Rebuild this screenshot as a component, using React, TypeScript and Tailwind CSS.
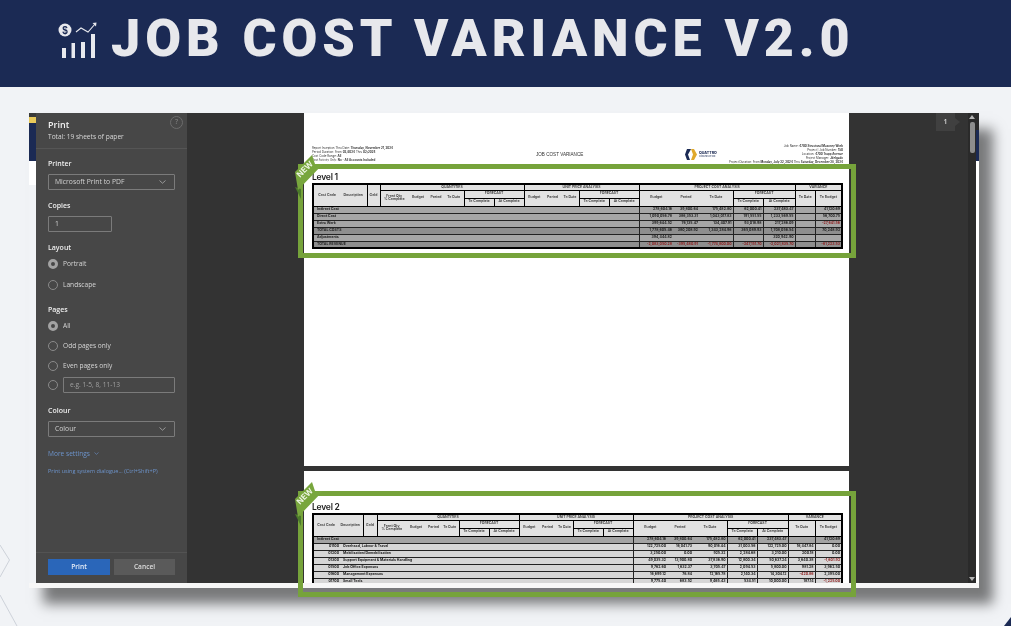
const levelOneCols = ["w-[27px]", "w-[27px]", "w-[13px]", "w-[28px]", "w-[20px]", "w-[16px]", "w-[20px]", "w-[30px]", "w-[30px]", "w-[20px]", "w-[17px]", "w-[18px]", "w-[30px]", "w-[30px]", "w-[34px]", "w-[26px]", "w-[34px]", "w-[30px]", "w-[32px]", "w-[20px]", "w-[27px]"];
const levelTwoCols = ["w-[25px]", "w-[25px]", "w-[14px]", "w-[29px]", "w-[20px]", "w-[15px]", "w-[18px]", "w-[30px]", "w-[30px]", "w-[20px]", "w-[17px]", "w-[17px]", "w-[30px]", "w-[30px]", "w-[34px]", "w-[26px]", "w-[34px]", "w-[30px]", "w-[31px]", "w-[27px]", "w-[27px]"];

type Row = { code?: string; label: string; values: string[]; tone: string };

const levelOneRows: Row[] = [
  { label: "Indirect Cost", tone: "bg-[#a6a6a6]", values: ["278,604.16", "39,800.64", "175,482.80", "62,000.41", "237,483.47", "", "41,120.69"] },
  { label: "Direct Cost", tone: "bg-[#a6a6a6]", values: ["1,090,056.78", "386,353.31", "1,043,017.83", "191,551.55", "1,233,569.55", "", "56,700.75"] },
  { label: "Extra Work", tone: "bg-[#a6a6a6]", values: ["399,644.52", "76,135.47", "134,407.91", "93,018.98", "217,286.09", "", "-27,641.56"] },
  { label: "TOTAL COSTS", tone: "bg-[#8e8e8e]", values: ["1,778,605.46", "380,208.92", "1,343,284.96", "365,089.93", "1,708,056.54", "", "70,248.92"] },
  { label: "Adjustments", tone: "bg-[#a6a6a6]", values: ["394,444.82", "", "", "", "320,942.90", "", ""] },
  { label: "TOTAL REVENUE", tone: "bg-[#8e8e8e]", values: ["-2,083,050.28", "-395,480.91", "-1,774,800.00", "-247,151.70", "-2,021,835.70", "", "-61,223.53"] },
];

const levelTwoRows: Row[] = [
  { label: "Indirect Cost", tone: "bg-[#a3a3a3]", values: ["278,604.16", "39,800.64", "175,482.80", "62,000.41", "237,483.47", "", "41,120.69"] },
  { code: "01100", label: "Overhead, Labour & Travel", tone: "bg-[#d6d6d6]", values: ["122,725.00", "16,041.73", "90,016.44", "31,003.56", "122,725.00", "16,447.84", "0.00"] },
  { code: "01200", label: "Mobilization/Demobilization", tone: "bg-[#d6d6d6]", values: ["3,250.00", "0.00", "925.32", "2,284.68", "3,210.00", "200.18", "0.00"] },
  { code: "01300", label: "Support Equipment & Materials Handling", tone: "bg-[#d6d6d6]", values: ["49,035.32", "13,900.80", "37,836.90", "12,800.34", "50,637.24", "3,640.38", "-1,601.92"] },
  { code: "01500", label: "Job Office Expenses", tone: "bg-[#d6d6d6]", values: ["9,762.60", "1,632.37", "3,705.47", "2,094.53", "5,800.00", "981.28", "3,962.50"] },
  { code: "01600", label: "Management Expenses", tone: "bg-[#d6d6d6]", values: ["16,699.12", "76.84", "12,165.78", "2,140.34", "14,304.12", "-420.86", "2,395.00"] },
  { code: "01700", label: "Small Tools", tone: "bg-[#d6d6d6]", values: ["9,775.40", "683.52", "9,465.43", "534.51", "10,000.00", "187.14", "-1,225.00"] },
];

const th = "border border-black bg-[#e2e2e2] p-0 text-center align-middle font-semibold leading-none text-[#333]";

// budget / period / to date run together without a rule in the body rows
const valueEdges = ["border-r-0", "border-x-0", "border-l-0", "", "", "", ""];

function ForecastCells() {
  return (
    <>
      <th className={th}>To Complete</th>
      <th className={th}>At Complete</th>
    </>
  );
}

function CostTable({ cols, rows }: { cols: string[]; rows: Row[] }) {
  return (
    <table className="w-[531px] table-fixed border-collapse border-2 border-black text-[3.5px] font-['Inter',sans-serif]">
      <colgroup>
        {cols.map((c, i) => (
          <col key={i} className={c} />
        ))}
      </colgroup>
      <thead>
        <tr className="h-[6px]">
          <th rowSpan={3} className={`${th} border-r-0`}>Cost Code</th>
          <th rowSpan={3} className={`${th} border-l-0`}>Description</th>
          <th rowSpan={3} className={th}>Gold</th>
          <th colSpan={6} className={th}>QUANTITIES</th>
          <th colSpan={5} className={th}>UNIT PRICE ANALYSIS</th>
          <th colSpan={5} className={th}>PROJECT COST ANALYSIS</th>
          <th colSpan={2} className={th}>VARIANCE</th>
        </tr>
        <tr className="h-[8px]">
          <th rowSpan={2} className={`${th} border-r-0`}>Front Qty<br />% Complete</th>
          <th rowSpan={2} className={`${th} border-x-0`}>Budget</th>
          <th rowSpan={2} className={`${th} border-x-0`}>Period</th>
          <th rowSpan={2} className={`${th} border-l-0`}>To Date</th>
          <th colSpan={2} className={th}>FORECAST</th>
          <th rowSpan={2} className={`${th} border-r-0`}>Budget</th>
          <th rowSpan={2} className={`${th} border-x-0`}>Period</th>
          <th rowSpan={2} className={`${th} border-l-0`}>To Date</th>
          <th colSpan={2} className={th}>FORECAST</th>
          <th rowSpan={2} className={`${th} border-r-0`}>Budget</th>
          <th rowSpan={2} className={`${th} border-x-0`}>Period</th>
          <th rowSpan={2} className={`${th} border-l-0`}>To Date</th>
          <th colSpan={2} className={th}>FORECAST</th>
          <th rowSpan={2} className={th}>To Date</th>
          <th rowSpan={2} className={th}>To Budget</th>
        </tr>
        <tr className="h-[8px]">
          <ForecastCells />
          <ForecastCells />
          <ForecastCells />
        </tr>
      </thead>
      <tbody>
        {rows.map((row) => (
          <tr key={row.label} className={`h-[7px] ${row.tone}`}>
            <td colSpan={14} className="overflow-hidden whitespace-nowrap border border-[#222] p-0 font-bold leading-none text-[#222]">
              {row.code ? (
                <span className="flex">
                  <span className="w-[25px] text-right">{row.code}</span>
                  <span className="ml-[4px]">{row.label}</span>
                </span>
              ) : (
                <span className="pl-[3px]">{row.label}</span>
              )}
            </td>
            {row.values.map((v, i) => (
              <td
                key={i}
                className={`overflow-hidden whitespace-nowrap border border-[#222] p-0 pr-[1px] text-right font-bold leading-none ${valueEdges[i]} ${v.startsWith("-") ? "text-[#8f1d1d]" : "text-[#222]"}`}
              >
                {v}
              </td>
            ))}
          </tr>
        ))}
      </tbody>
    </table>
  );
}

function SectionLabel({ children, className }: { children: string; className: string }) {
  return <div className={`h-[11px] text-[7px] font-semibold leading-[11px] text-[#eeeeee] ${className}`}>{children}</div>;
}

function Chevron() {
  return (
    <svg width="7" height="4" viewBox="0 0 7 4" fill="none" stroke="#bdbdbd" strokeWidth="0.7">
      <path d="M0.5 0.5 L3.5 3.2 L6.5 0.5" />
    </svg>
  );
}

function SelectBox({ value, className }: { value: string; className: string }) {
  return (
    <div className={`flex h-[16px] items-center justify-between rounded-[1px] border border-[#7b7b7b] pl-[6px] pr-[8px] text-[6.8px] text-[#d2d2d2] ${className}`}>
      <span>{value}</span>
      <Chevron />
    </div>
  );
}

function Radio({ selected }: { selected?: boolean }) {
  return selected ? (
    <span className="h-[10px] w-[10px] shrink-0 rounded-full border-[3px] border-[#a3a3a3] bg-[#474747]" />
  ) : (
    <span className="h-[10px] w-[10px] shrink-0 rounded-full border border-[#8a8a8a]" />
  );
}

function RadioRow({ label, selected, className }: { label: string; selected?: boolean; className: string }) {
  return (
    <div className={`flex h-[11px] items-center gap-[5px] text-[6.6px] text-[#d6d6d6] ${className}`}>
      <Radio selected={selected} />
      <span>{label}</span>
    </div>
  );
}

function Sidebar() {
  return (
    <aside className="flex w-[151px] shrink-0 flex-col bg-[#474747] font-['Open_Sans',sans-serif]">
      <div className="relative h-[36px] shrink-0 border-b border-[#555555] pl-[12px] pt-[5px]">
        <div className="text-[9px] font-semibold leading-[13px] text-[#f0f0f0]">Print</div>
        <div className="text-[6.6px] leading-[11px] text-[#d8d8d8]">Total: 19 sheets of paper</div>
        <span className="absolute right-[4px] top-[3px] flex h-[13px] w-[13px] items-center justify-center rounded-full border border-[#6c6c6c] text-[7px] text-[#8a8a8a]">?</span>
      </div>
      <div className="flex flex-1 flex-col px-[12px]">
        <SectionLabel className="mt-[9px]">Printer</SectionLabel>
        <SelectBox value="Microsoft Print to PDF" className="mt-[5px]" />
        <SectionLabel className="mt-[10px]">Copies</SectionLabel>
        <div className="mt-[5px] flex h-[16px] w-[64px] items-center rounded-[1px] border border-[#7b7b7b] pl-[6px] text-[6.8px] text-[#d2d2d2]">1</div>
        <SectionLabel className="mt-[10px]">Layout</SectionLabel>
        <RadioRow label="Portrait" selected className="mt-[5px]" />
        <RadioRow label="Landscape" className="mt-[10px]" />
        <SectionLabel className="mt-[14px]">Pages</SectionLabel>
        <RadioRow label="All" selected className="mt-[5px]" />
        <RadioRow label="Odd pages only" className="mt-[9px]" />
        <RadioRow label="Even pages only" className="mt-[9px]" />
        <div className="mt-[6px] flex items-center gap-[5px]">
          <Radio />
          <div className="flex h-[16px] flex-1 items-center rounded-[1px] border border-[#7b7b7b] pl-[6px] text-[6.6px] text-[#a0a0a0]">e.g. 1-5, 8, 11-13</div>
        </div>
        <SectionLabel className="mt-[12px]">Colour</SectionLabel>
        <SelectBox value="Colour" className="mt-[5px]" />
        <div className="mt-[11px] flex h-[11px] items-center gap-[4px] text-[6.6px] text-[#6d94cc]">
          <span>More settings</span>
          <svg width="5" height="3" viewBox="0 0 5 3" fill="none" stroke="#6d94cc" strokeWidth="0.6">
            <path d="M0.5 0.5 L2.5 2.3 L4.5 0.5" />
          </svg>
        </div>
        <div className="mt-[7px] h-[11px] whitespace-nowrap text-[5.5px] leading-[11px] text-[#6d94cc]">Print using system dialogue... (Ctrl+Shift+P)</div>
      </div>
      <div className="flex h-[31px] shrink-0 gap-[4px] border-t border-[#535353] px-[12px] pt-[6px]">
        <div className="flex h-[16px] w-[62px] items-center justify-center bg-[#2a66b9] text-[6.6px] font-semibold text-[#e8eef8]">Print</div>
        <div className="flex h-[16px] flex-1 items-center justify-center bg-[#5a5a5a] text-[6.6px] font-semibold text-[#dedede]">Cancel</div>
      </div>
    </aside>
  );
}

function ReportHeader() {
  return (
    <div className="flex h-[20px] w-[531px] items-center text-[2.9px] leading-[4px] text-[#333] font-['Inter',sans-serif]">
      <div className="w-[224px]">
        <div>Report Inception Thru Date: <b>Thursday, November 21, 2024</b></div>
        <div>Period Duration: From <b>02/2024</b> Thru <b>02/2024</b></div>
        <div>Cost Code Range: <b>All</b></div>
        <div>Post Activity Only: <b>No - All Accounts Included</b></div>
      </div>
      <div className="w-[149px] whitespace-nowrap pt-[1px] text-[4.6px] font-medium text-[#333] font-['Liberation_Sans',sans-serif]">JOB COST VARIANCE</div>
      <div className="flex w-[45px] items-center gap-[2px]">
        <svg width="12" height="11" viewBox="0 0 12 11" className="shrink-0">
          <path d="M6 0 L2 0 L0 5.5 L2 11 L5 11 L3 5.5 L5 2 Z" fill="#1b2a54" />
          <path d="M6 0 L9 0 L12 5.5 L9 11 L6 11 L8 5.5 Z" fill="#e0a92c" />
        </svg>
        <div className="text-[3.6px] font-extrabold leading-[4px] text-[#1b2a54]">
          QUATTRO
          <div className="text-[2px] font-medium leading-[2.5px]">CONSTRUCTION</div>
        </div>
      </div>
      <div className="w-[113px] whitespace-nowrap text-right">
        <div>Job Name: <b>4700 Structural Masonry Work</b></div>
        <div>Project | Job Number: <b>150</b></div>
        <div>Location: <b>4700 Trapp Avenue</b></div>
        <div>Project Manager: <b>Jdelgado</b></div>
        <div className="flex justify-end">Project Duration: From&nbsp;<b>Monday, July 22, 2024</b>&nbsp;Thru&nbsp;<b>Saturday, December 28, 2024</b></div>
      </div>
    </div>
  );
}

function Preview() {
  return (
    <div className="relative flex-1 overflow-hidden bg-[#333333] pl-[117px]">
      <section className="h-[353px] w-[545px] bg-white pl-[8px] pt-[31px]">
        <ReportHeader />
        <h2 className="flex h-[19px] items-end pb-[2px] text-[8.5px] font-semibold leading-none tracking-tight text-[#222] font-['Inter',sans-serif]">Level 1</h2>
        <CostTable cols={levelOneCols} rows={levelOneRows} />
      </section>
      <section className="mt-[5px] h-[200px] w-[545px] bg-white pl-[8px] pt-[29px]">
        <h2 className="flex h-[13px] items-end pb-[2px] text-[8.5px] font-semibold leading-none tracking-tight text-[#222] font-['Inter',sans-serif]">Level 2</h2>
        <CostTable cols={levelTwoCols} rows={levelTwoRows} />
      </section>
      {/* page number flag */}
      <div className="absolute right-[8px] top-0 flex h-[18px] items-center">
        <div className="flex h-[18px] w-[19px] items-center justify-center bg-[#404040] text-[7px] font-semibold text-[#dddddd] font-['Open_Sans',sans-serif]">1</div>
        <div className="h-0 w-0 border-y-[4px] border-l-[5px] border-y-transparent border-l-[#404040]" />
      </div>
    </div>
  );
}

function Scrollbar() {
  return (
    <div className="flex w-[8px] shrink-0 flex-col items-center justify-between bg-[#2a2a2a] py-[2px]">
      <div className="flex flex-col items-center gap-[3px]">
        <div className="h-0 w-0 border-x-[3px] border-b-[4px] border-x-transparent border-b-[#b5b5b5]" />
        <div className="h-[31px] w-[5px] rounded-[2px] bg-[#8d8d8d]" />
      </div>
      <div className="h-0 w-0 border-x-[3px] border-t-[4px] border-x-transparent border-t-[#b5b5b5]" />
    </div>
  );
}

function NewRibbon({ className }: { className: string }) {
  return (
    <div className={`absolute h-[48px] w-[34px] ${className}`}>
      <svg width="34" height="48" viewBox="0 0 34 48" className="absolute inset-0">
        <polygon points="2,34 8,36 8,46" fill="#4b7a2a" />
        <polygon points="2,19 19,2 22,11 30,11 5,37" fill="#78a63d" />
      </svg>
      <span className="absolute left-[2px] top-[12px] rotate-[-45deg] text-[8px] font-bold leading-none text-[#eef5e4] font-['Inter',sans-serif]">NEW</span>
    </div>
  );
}

export default function App() {
  return (
    <div className="relative h-[626px] w-[1011px] overflow-hidden bg-[#f1f3f6] blur-[0.5px]">
      {/* backdrop lines and corner */}
      <svg width="20" height="85" viewBox="0 0 20 85" fill="none" stroke="#c4c9d2" strokeWidth="0.8" className="absolute left-0 top-[541px]">
        <path d="M0 4 L9.5 19 L0 36" />
        <path d="M0 54 L17 85" />
      </svg>
      <svg width="8" height="10" viewBox="0 0 8 10" className="absolute bottom-0 right-0">
        <polygon points="8,1 8,10 1,10" fill="#1b2a54" />
      </svg>

      <header className="flex h-[87px] items-center gap-[13px] bg-[#1b2a54] pb-[7px] pl-[58px]">
        <svg width="40" height="40" viewBox="0 0 40 40" className="shrink-0">
          <circle cx="7" cy="10" r="6.5" fill="#e8e9ee" />
          <text x="7" y="13.5" textAnchor="middle" fontSize="10" fontWeight="700" fill="#1b2a54" fontFamily="Liberation Sans, sans-serif">$</text>
          <path d="M18 12 L23 8 L30 12 L37.5 3.5" fill="none" stroke="#e8e9ee" strokeWidth="1.1" />
          <path d="M34.5 3 L38.5 2.5 L38 6.5 Z" fill="#e8e9ee" />
          <rect x="4" y="28" width="4" height="10" fill="#e8e9ee" />
          <rect x="13.5" y="23" width="3.5" height="15" fill="#e8e9ee" />
          <rect x="23" y="22" width="4" height="16" fill="#e8e9ee" />
          <rect x="33" y="14" width="4" height="24" fill="#e8e9ee" />
        </svg>
        <h1 className="mb-[3px] whitespace-nowrap text-[52px] font-black leading-none tracking-[0.095em] text-[#e7e8ec] font-['Roboto',sans-serif]">JOB COST VARIANCE V2.0</h1>
      </header>

      <div className="pl-[29px] pt-[26px]">
        <div className="flex h-[475px] w-[950px] flex-col shadow-[14px_16px_12px_rgba(0,0,0,0.5)]">
          <div className="flex h-[470px]">
            {/* window behind the dialog, left edge */}
            <div className="flex w-[7px] shrink-0 flex-col">
              <div className="h-[4px] bg-[#3a3a3a]" />
              <div className="h-[6px] bg-[#e8c95a]" />
              <div className="h-[38px] bg-[#1b2a54]" />
              <div className="h-[24px] bg-white" />
              <div className="flex-1 bg-[#f1f3f6]" />
            </div>
            <Sidebar />
            <Preview />
            <Scrollbar />
            {/* window behind the dialog, right edge */}
            <div className="flex w-[3px] shrink-0 flex-col">
              <div className="h-[17px] bg-[#2a2a2a]" />
              <div className="h-[31px] bg-[#1b2a54]" />
              <div className="flex-1 bg-white" />
            </div>
          </div>
          <div className="h-[5px] bg-[#f7f7f7]" />
        </div>
      </div>

      {/* green call-outs lying over the screenshot */}
      <div className="absolute left-[298px] top-[164px] h-[94px] w-[558px] border-[5px] border-[#76a33b]" />
      <div className="absolute left-[298px] top-[491px] h-[106px] w-[558px] border-[5px] border-[#76a33b]" />
      <NewRibbon className="left-[293px] top-[153px]" />
      <NewRibbon className="left-[293px] top-[480px]" />
    </div>
  );
}
